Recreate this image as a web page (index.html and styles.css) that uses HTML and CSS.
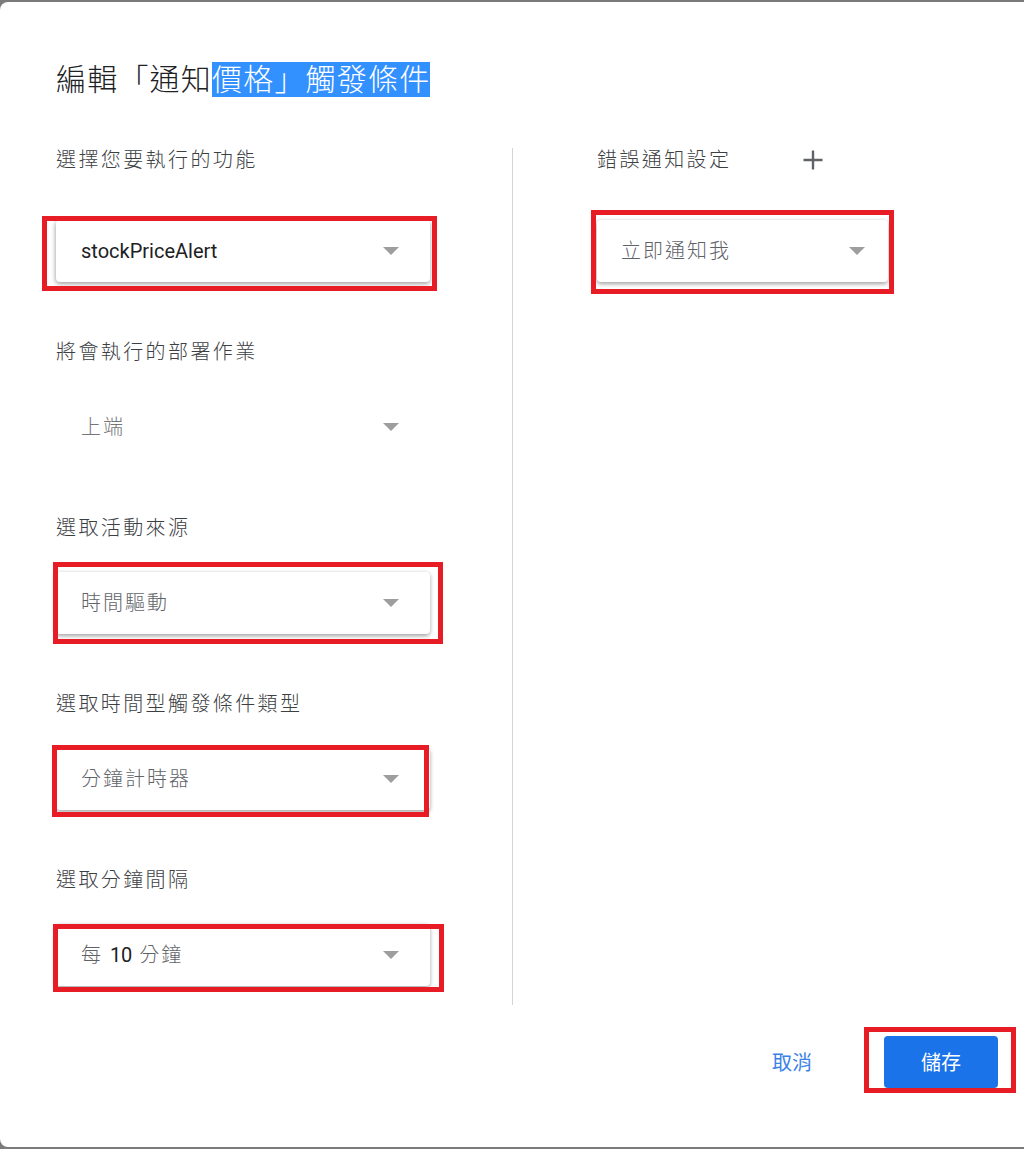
FILE: index.html
```html
<!DOCTYPE html>
<html lang="zh-Hant">
<head>
<meta charset="utf-8">
<title>編輯觸發條件</title>
<link rel="stylesheet" href="styles.css">
</head>
<body>
<div class="dialog">
  <h1 class="title">編輯「通知<span class="sel">價格」觸發條件</span></h1>
  <div class="columns">
    <div class="col-left">
      <div class="field field-first">
        <div class="label">選擇您要執行的功能</div>
        <div class="select">
          <span class="value"><span class="latin">stockPriceAlert</span></span>
          <span class="arrow"></span>
          <span class="mark mark-1"></span>
        </div>
      </div>
      <div class="field">
        <div class="label">將會執行的部署作業</div>
        <div class="select disabled">
          <span class="value">上端</span>
          <span class="arrow"></span>
        </div>
      </div>
      <div class="field">
        <div class="label">選取活動來源</div>
        <div class="select">
          <span class="value">時間驅動</span>
          <span class="arrow"></span>
          <span class="mark mark-3"></span>
        </div>
      </div>
      <div class="field">
        <div class="label">選取時間型觸發條件類型</div>
        <div class="select">
          <span class="value">分鐘計時器</span>
          <span class="arrow"></span>
          <span class="mark mark-4"></span>
        </div>
      </div>
      <div class="field">
        <div class="label">選取分鐘間隔</div>
        <div class="select">
          <span class="value">每 <span class="latin">10</span> 分鐘</span>
          <span class="arrow"></span>
          <span class="mark mark-5"></span>
        </div>
      </div>
    </div>
    <div class="col-right">
      <div class="field field-first">
        <div class="label label-row">
          <span>錯誤通知設定</span>
          <svg class="plus" width="22" height="22" viewBox="0 0 22 22" aria-hidden="true">
            <path d="M11 1.5V20.5M1.5 11H20.5" stroke="#5f6368" stroke-width="2.4" fill="none"/>
          </svg>
        </div>
        <div class="select select-narrow">
          <span class="value">立即通知我</span>
          <span class="arrow"></span>
          <span class="mark mark-r"></span>
        </div>
      </div>
    </div>
  </div>
  <div class="footer">
    <button class="btn-cancel" type="button">取消</button>
    <button class="btn-save" type="button">儲存<span class="mark mark-save"></span></button>
  </div>
</div>
</body>
</html>
```

FILE: styles.css
```css
* {
  box-sizing: border-box;
}

html,
body {
  margin: 0;
  height: 100%;
}

body {
  background: #7b7b7b;
  font-family: Roboto, "Noto Sans CJK TC", sans-serif;
  overflow: hidden;
}

.dialog {
  position: relative;
  margin-top: 2px;
  height: 1145px;
  background: #ffffff;
  border-radius: 8px 0 0 8px;
  padding: 57px 0 0 56px;
}

.title {
  margin: 0;
  font-size: 30px;
  font-weight: 300;
  line-height: 42px;
  letter-spacing: 1.2px;
  color: #202124;
}

.sel {
  background: #3390ff;
  color: #ffffff;
}

.columns {
  display: flex;
  margin-top: 47px;
}

.col-left {
  width: 456px;
  padding-bottom: 19px;
}

.col-right {
  flex: 1;
  border-left: 1px solid #d4d4d4;
  padding-left: 84px;
}

.field + .field {
  margin-top: 58px;
}

.label {
  font-size: 20px;
  line-height: 24px;
  letter-spacing: 2.4px;
  font-weight: 300;
  color: #3c4043;
}

.label-row {
  display: flex;
  align-items: center;
}

.plus {
  margin-left: 71px;
  display: block;
}

.select {
  position: relative;
  margin-top: 32px;
  width: 374px;
  height: 62px;
  display: flex;
  align-items: center;
  justify-content: space-between;
  padding: 0 31px 0 25px;
  background: #ffffff;
  border-radius: 4px;
  box-shadow: 0 2px 4px rgba(0, 0, 0, 0.28), -1px 1px 5px rgba(0, 0, 0, 0.14);
}

.field-first .select {
  margin-top: 48px;
}

.select-narrow {
  width: 291px;
  padding: 0 23px 0 24px;
}

.select.disabled {
  box-shadow: none;
}

.value {
  font-size: 20px;
  line-height: 24px;
  letter-spacing: 2px;
  font-weight: 300;
  color: #5f6368;
}

.disabled .value {
  color: #757575;
}

.latin {
  font-family: Roboto, sans-serif;
  font-weight: 400;
  letter-spacing: 0;
  color: #202124;
}

.arrow {
  width: 0;
  height: 0;
  border-left: 8px solid transparent;
  border-right: 8px solid transparent;
  border-top: 8px solid #9e9e9e;
}

.mark {
  position: absolute;
  border: 5px solid #e81c24;
  pointer-events: none;
}

.mark-1 {
  left: -14px;
  top: -4px;
  width: 395px;
  height: 75px;
}

.mark-3 {
  left: -3px;
  top: -10px;
  width: 390px;
  height: 82px;
}

.mark-4 {
  left: -4px;
  top: -3px;
  width: 377px;
  height: 72px;
}

.mark-5 {
  left: -3px;
  top: 0;
  width: 391px;
  height: 68px;
}

.mark-r {
  left: -6px;
  top: -10px;
  width: 303px;
  height: 84px;
}

.mark-save {
  left: -20px;
  top: -9px;
  width: 152px;
  height: 66px;
}

.footer {
  display: flex;
  justify-content: flex-end;
  align-items: center;
  margin-top: 31px;
  padding-right: 26px;
}

.btn-cancel {
  border: 0;
  background: transparent;
  font-family: "Noto Sans CJK TC", sans-serif;
  font-size: 20px;
  line-height: 24px;
  color: #3b82e6;
  padding: 0 20px;
  margin-right: 52px;
}

.btn-save {
  position: relative;
  width: 114px;
  height: 52px;
  border: 0;
  border-radius: 4px;
  background: #1a73e8;
  color: #ffffff;
  font-family: "Noto Sans CJK TC", sans-serif;
  font-size: 20px;
  line-height: 24px;
  padding: 0;
}
```
